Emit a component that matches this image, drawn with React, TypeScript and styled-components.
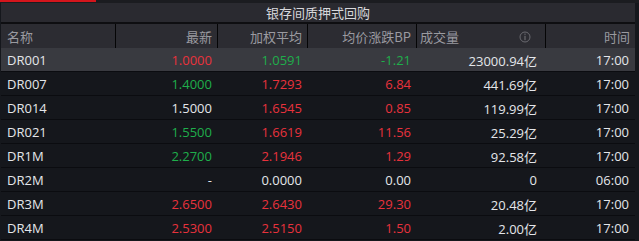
import React from "react";
import styled, { createGlobalStyle } from "styled-components";

const GlobalStyle = createGlobalStyle`
  html, body {
    margin: 0;
    padding: 0;
    background: #15171c;
  }
  body {
    font-family: "Open Sans", "Noto Sans CJK SC", sans-serif;
  }
`;

type Tone = "up" | "down" | "flat";

interface Row {
  name: string;
  last: string;
  lastTone: Tone;
  avg: string;
  avgTone: Tone;
  bp: string;
  bpTone: Tone;
  volume: string;
  time: string;
}

const rows: Row[] = [
  { name: "DR001", last: "1.0000", lastTone: "up", avg: "1.0591", avgTone: "down", bp: "-1.21", bpTone: "down", volume: "23000.94亿", time: "17:00" },
  { name: "DR007", last: "1.4000", lastTone: "down", avg: "1.7293", avgTone: "up", bp: "6.84", bpTone: "up", volume: "441.69亿", time: "17:00" },
  { name: "DR014", last: "1.5000", lastTone: "flat", avg: "1.6545", avgTone: "up", bp: "0.85", bpTone: "up", volume: "119.99亿", time: "17:00" },
  { name: "DR021", last: "1.5500", lastTone: "down", avg: "1.6619", avgTone: "up", bp: "11.56", bpTone: "up", volume: "25.29亿", time: "17:00" },
  { name: "DR1M", last: "2.2700", lastTone: "down", avg: "2.1946", avgTone: "up", bp: "1.29", bpTone: "up", volume: "92.58亿", time: "17:00" },
  { name: "DR2M", last: "-", lastTone: "flat", avg: "0.0000", avgTone: "flat", bp: "0.00", bpTone: "flat", volume: "0", time: "06:00" },
  { name: "DR3M", last: "2.6500", lastTone: "up", avg: "2.6430", avgTone: "up", bp: "29.30", bpTone: "up", volume: "20.48亿", time: "17:00" },
  { name: "DR4M", last: "2.5300", lastTone: "up", avg: "2.5150", avgTone: "up", bp: "1.50", bpTone: "up", volume: "2.00亿", time: "17:00" },
];

const toneColor: Record<Tone, string> = {
  up: "#e8323c",
  down: "#1fae4b",
  flat: "#e4e6ea",
};

const COLUMNS = "114px 102px 90px 109px 129px 90px";

export default function App() {
  return (
    <>
      <GlobalStyle />
      <Panel>
        <TopStrip>
          <ActiveMark />
        </TopStrip>
        <TitleBar>银存间质押式回购</TitleBar>
        <HeaderRow>
          <HeadCell $align="left">名称</HeadCell>
          <HeadCell $align="right">最新</HeadCell>
          <HeadCell $align="right">加权平均</HeadCell>
          <HeadCell $align="right">均价涨跌BP</HeadCell>
          <HeadCell $align="split">
            <span>成交量</span>
            <InfoIcon />
          </HeadCell>
          <HeadCell $align="right">时间</HeadCell>
        </HeaderRow>
        {rows.map((r, i) => (
          <DataRow key={r.name} $active={i === 0}>
            <NameCell>{r.name}</NameCell>
            <NumCell $tone={r.lastTone}>{r.last}</NumCell>
            <NumCell $tone={r.avgTone}>{r.avg}</NumCell>
            <NumCell $tone={r.bpTone}>{r.bp}</NumCell>
            <VolumeCell>{r.volume}</VolumeCell>
            <TimeCell>{r.time}</TimeCell>
          </DataRow>
        ))}
      </Panel>
    </>
  );
}

function InfoIcon() {
  return (
    <svg width="12" height="12" viewBox="0 0 12 12">
      <circle cx="6" cy="6" r="5" fill="none" stroke="#6a6a70" strokeWidth="1" />
      <rect x="5.4" y="2.6" width="1.2" height="1.2" fill="#6a6a70" />
      <rect x="5.4" y="4.8" width="1.2" height="4.4" fill="#6a6a70" />
    </svg>
  );
}

const Panel = styled.div`
  width: 639px;
  height: 241px;
  overflow: hidden;
  background: #15171c;
  display: flex;
  flex-direction: column;
`;

const TopStrip = styled.div`
  height: 3px;
  background: #1b1c20;
  flex-shrink: 0;
`;

const ActiveMark = styled.div`
  width: 96px;
  height: 2px;
  background: #d4151c;
`;

const TitleBar = styled.div`
  height: 19px;
  margin: 0 4px 0 1px;
  background: #2a2a30;
  border-bottom: 2px solid #0e0e11;
  display: flex;
  align-items: center;
  justify-content: center;
  color: #d8d8dc;
  font-family: "Noto Sans CJK SC", sans-serif;
  font-size: 13px;
  flex-shrink: 0;
`;

const HeaderRow = styled.div`
  display: grid;
  grid-template-columns: ${COLUMNS};
  height: 24px;
  margin: 0 4px 0 1px;
  background: #2c2c32;
  flex-shrink: 0;
`;

const HeadCell = styled.div<{ $align: "left" | "right" | "split" }>`
  display: flex;
  align-items: center;
  justify-content: ${(p) =>
    p.$align === "left" ? "flex-start" : p.$align === "right" ? "flex-end" : "space-between"};
  padding: 1px ${(p) => (p.$align === "split" ? "14px" : "5px")} 0
    ${(p) => (p.$align === "left" ? "6px" : "3px")};
  color: #9a9aa0;
  font-family: "Noto Sans CJK SC", sans-serif;
  font-size: 13px;
  & + & {
    border-left: 1px solid #050506;
  }
`;

const DataRow = styled.div<{ $active: boolean }>`
  display: grid;
  grid-template-columns: ${COLUMNS};
  height: 23px;
  margin: 0 4px 0 1px;
  background: ${(p) => (p.$active ? "#393a40" : "#15171c")};
  border-bottom: 1px solid #0b0c10;
  flex-shrink: 0;
  font-size: 13px;
`;

const Cell = styled.div`
  display: flex;
  align-items: center;
  padding-top: 1px;
  white-space: nowrap;
`;

const NameCell = styled(Cell)`
  padding-left: 6px;
  color: #e4e6ea;
`;

const NumCell = styled(Cell)<{ $tone: Tone }>`
  justify-content: flex-end;
  padding-right: 5px;
  color: ${(p) => toneColor[p.$tone]};
`;

const VolumeCell = styled(Cell)`
  justify-content: flex-end;
  padding-right: 8px;
  color: #e4e6ea;
`;

const TimeCell = styled(Cell)`
  justify-content: flex-end;
  padding-right: 6px;
  color: #e4e6ea;
`;
